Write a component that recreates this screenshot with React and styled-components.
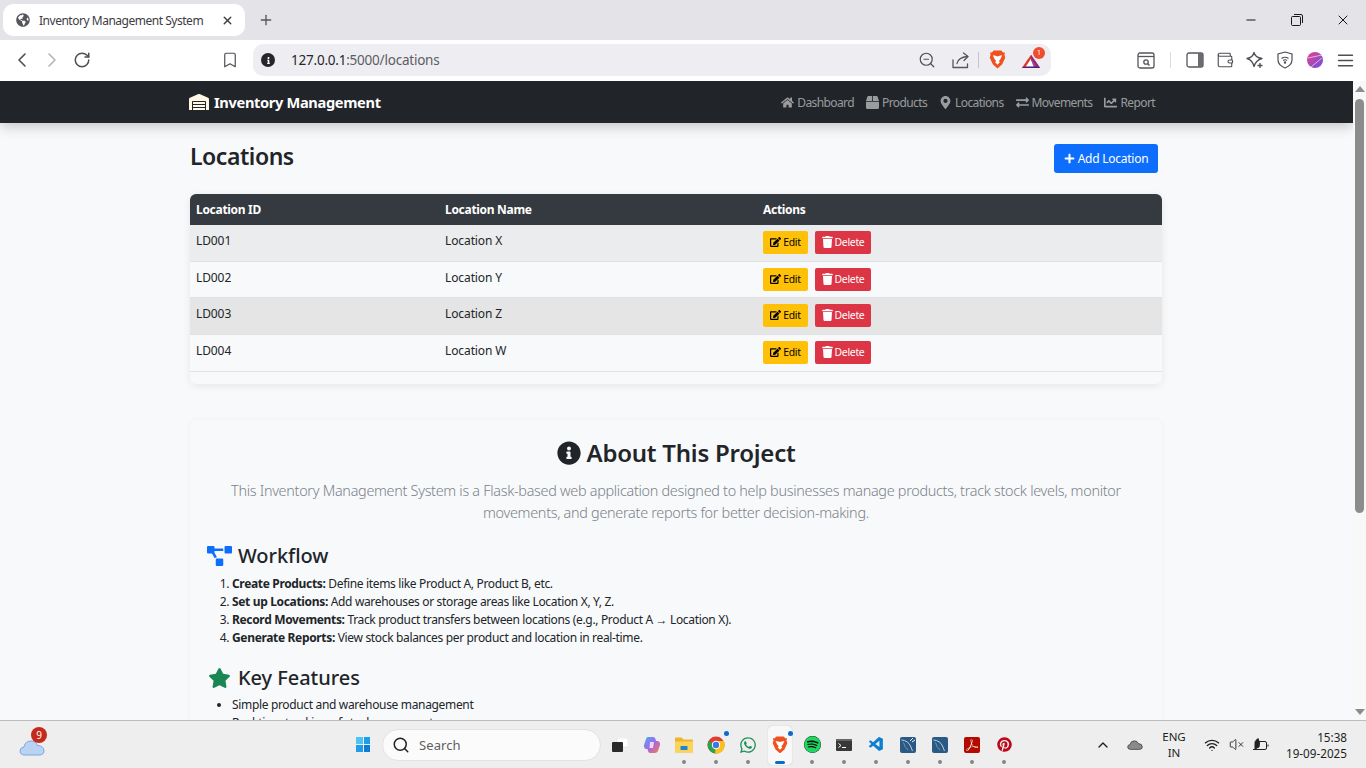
import React from 'react';
import styled, { createGlobalStyle } from 'styled-components';
import {
    FaWarehouse, FaHome, FaBox, FaMapMarkerAlt, FaExchangeAlt, FaChartLine, FaPlus, FaEdit, FaTrash,
    FaInfoCircle, FaProjectDiagram, FaStar, FaGlobeAmericas, FaWhatsapp, FaSpotify, FaPinterest, FaInfo
} from 'react-icons/fa';
import { SiAdobeacrobatreader } from 'react-icons/si';
import { VscVscode } from 'react-icons/vsc';
import { LuChevronLeft, LuChevronRight, LuRotateCw, LuBookmark, LuZoomOut, LuWifi, LuChevronUp, LuVolumeX, LuSearch, LuPlus, LuX, LuMinus, LuMenu, LuWallet } from 'react-icons/lu';

const UI_FONT = '"Noto Sans", "Open Sans", sans-serif';

const GlobalStyle = createGlobalStyle`
    html, body { margin: 0; padding: 0; height: 100%; overflow: hidden; }
    body { font-family: ${UI_FONT}; color: #212529; }
    * { box-sizing: border-box; }
`;

const Screen = styled.div`
    width: 1366px;
    height: 768px;
    display: flex;
    flex-direction: column;
    overflow: hidden;
    background: #f8f9fa;
`;

// browser chrome
const TabStrip = styled.div`
    height: 40px;
    flex: none;
    background: #e3e3e8;
    display: flex;
    align-items: flex-end;
    padding-left: 3px;
`;

const Tab = styled.div`
    width: 242px;
    height: 32px;
    margin-bottom: 4px;
    background: #fff;
    border-radius: 10px;
    display: flex;
    align-items: center;
    padding: 0 11px 0 13px;
    font-size: 12px;
    letter-spacing: -0.48px;
    color: #3c3c43;
    svg:first-child { margin-right: 9px; color: #55565c; }
    span { flex: 1; }
`;

const NewTab = styled.div`
    width: 42px;
    height: 40px;
    display: flex;
    align-items: center;
    justify-content: center;
    color: #55565c;
`;

const WindowButtons = styled.div`
    margin-left: auto;
    height: 40px;
    display: flex;
    align-items: center;
    color: #18181b;
    div { width: 46px; display: flex; justify-content: center; }
`;

const Toolbar = styled.div`
    height: 41px;
    flex: none;
    background: #fff;
    display: flex;
    align-items: center;
    padding: 0 0 1px 7px;
`;

const ToolIcon = styled.div`
    width: ${p => p.$w || 30}px;
    flex: none;
    display: flex;
    justify-content: center;
    align-items: center;
    color: ${p => p.$dim ? '#b4b4ba' : '#4e4f55'};
`;

const BookmarkSlot = styled(ToolIcon)`
    width: 149px;
    justify-content: flex-end;
    padding-right: 7px;
`;

const AddressBar = styled.div`
    width: 798px;
    height: 32px;
    flex: none;
    margin-left: 7px;
    margin-right: 80px;
    border-radius: 10px;
    background: #eeeef2;
    display: flex;
    align-items: center;
    padding: 0 8px;
`;

const Url = styled.div`
    margin-left: 16px;
    font-size: 13.5px;
    letter-spacing: -0.22px;
    color: #5c5d64;
    flex: 1;
    b { font-weight: 400; color: #26262b; }
`;

const InfoDot = styled.span`
    width: 14px;
    height: 14px;
    border-radius: 50%;
    background: #26262b;
    color: #fff;
    display: inline-flex;
    align-items: center;
    justify-content: center;
`;

const ToolSep = styled.div`
    width: 1px;
    flex: none;
    height: 16px;
    background: ${p => p.$light ? '#dcdce0' : '#c4c4c9'};
    margin: 0 ${p => p.$gap || 0}px;
`;

const BatWrap = styled.div`
    position: relative;
    width: 20px;
    height: 16px;
    flex: none;
    margin: 0 2px 0 6px;
`;

const BatBadge = styled.span`
    position: absolute;
    top: -5px;
    right: -4px;
    width: 12px;
    height: 12px;
    border-radius: 50%;
    background: #ef4d2f;
    color: #fff;
    font-size: 7px;
    line-height: 12px;
    text-align: center;
`;

const Viewport = styled.div`
    flex: 1;
    min-height: 0;
    display: flex;
`;

const Page = styled.div`
    flex: 1;
    min-width: 0;
    overflow: hidden;
    background: #f8f9fa;
`;

// scrollbar
const ScrollTrack = styled.div`
    width: 13px;
    flex: none;
    background: #f8f8f9;
    display: flex;
    flex-direction: column;
    align-items: center;
    padding-top: 5px;
`;

const ScrollThumb = styled.div`
    width: 9px;
    height: 414px;
    margin-top: 7px;
    margin-bottom: auto;
    border-radius: 5px;
    background: #8c8c8c;
`;

const ScrollArrow = styled.div`
    width: 0;
    height: 0;
    border-left: 5px solid transparent;
    border-right: 5px solid transparent;
    ${p => p.$down ? 'border-top: 6px solid #8c8c8c; margin-bottom: 5px;' : 'border-bottom: 6px solid #8c8c8c;'}
`;

// app navbar
const Navbar = styled.nav`
    height: 42px;
    background: #212529;
    box-shadow: 0 4px 12px rgba(0, 0, 0, 0.2);
    position: relative;
    display: flex;
    align-items: center;
    justify-content: space-between;
    padding: 0 198px 0 189px;
`;

const Brand = styled.div`
    display: flex;
    align-items: center;
    gap: 5px;
    color: #fff;
    font-size: 14.6px;
    font-weight: 700;
    letter-spacing: -0.33px;
    svg { width: 20px; height: 16px; color: #fff7e6; }
`;

const NavLinks = styled.div`
    display: flex;
    gap: 12px;
`;

const NavLink = styled.a`
    display: flex;
    align-items: center;
    gap: 3px;
    color: rgba(255, 255, 255, 0.55);
    font-size: 12px;
    letter-spacing: -0.6px;
    svg { height: 13px; width: auto; }
`;

const Main = styled.div`
    width: 972px;
    margin-left: 190px;
`;

const TitleRow = styled.div`
    height: 71px;
    display: flex;
    justify-content: space-between;
    align-items: center;
    padding: 21px 4px 21px 0;
`;

const Title = styled.h2`
    margin: 0 0 4px;
    font-size: 23px;
    font-weight: 600;
    letter-spacing: -0.45px;
    line-height: 29px;
`;

const AddButton = styled.button`
    width: 104px;
    height: 29px;
    border: 0;
    border-radius: 3px;
    background: #0d6efd;
    color: #fff;
    font: 400 12px ${UI_FONT};
    letter-spacing: -0.25px;
    display: flex;
    align-items: center;
    justify-content: center;
    gap: 3px;
`;

const TableCard = styled.div`
    border-radius: 6px;
    overflow: hidden;
    box-shadow: 0 2px 8px rgba(0, 0, 0, 0.08);
    padding-bottom: 12px;
    margin-bottom: 36px;
`;

const Table = styled.table`
    width: 100%;
    border-collapse: collapse;
    table-layout: fixed;
    font-size: 12px;
    letter-spacing: -0.1px;
`;

const HeadCell = styled.th`
    width: ${p => p.$w ? p.$w + 'px' : 'auto'};
    height: 31px;
    padding: 0 6px;
    background: #343a40;
    color: #fff;
    text-align: left;
    font-weight: 700;
    letter-spacing: -0.3px;
`;

const Row = styled.tr`
    background: ${p => p.$bg};
    border-bottom: 1px solid #dee2e6;
`;

const Cell = styled.td`
    height: ${p => p.$h}px;
    padding: 7px 6px 5px;
    vertical-align: top;
    line-height: 18px;
`;

const ActionCell = styled(Cell)`
    padding: 6px;
`;

const Actions = styled.div`
    display: flex;
    gap: 7px;
`;

const SmallButton = styled.button`
    height: 23px;
    width: ${p => p.$w}px;
    border: 0;
    border-radius: 2px;
    background: ${p => p.$bg};
    color: ${p => p.$fg};
    font: 400 10.4px ${UI_FONT};
    letter-spacing: -0.28px;
    display: flex;
    align-items: center;
    justify-content: center;
    gap: 2px;
    padding: 0 0 1px;
    svg { width: 11px; height: 12px; }
`;

const AboutCard = styled.section`
    border-radius: 6px;
    box-shadow: 0 0 6px rgba(0, 0, 0, 0.04);
    padding: 17px 17px 0;
`;

const AboutTitle = styled.h3`
    margin: 0 0 11px;
    display: flex;
    align-items: center;
    justify-content: center;
    gap: 6px;
    font-size: 24px;
    font-weight: 600;
    letter-spacing: -0.24px;
    line-height: 32px;
    svg { width: 24px; height: 24px; }
`;

const Lead = styled.p`
    margin: 0 auto 19px;
    width: 910px;
    text-align: center;
    color: #7a828a;
    font-size: 14.4px;
    font-weight: 300;
    letter-spacing: -0.29px;
    line-height: 22px;
`;

const SectionTitle = styled.h4`
    margin: 0 0 6px;
    display: flex;
    align-items: center;
    gap: 6px;
    font-size: 20px;
    font-weight: 500;
    letter-spacing: -0.05px;
    line-height: 26px;
    svg { width: 25px; height: 20px; color: ${p => p.$color}; }
`;

const Steps = styled.ol`
    margin: 0 0 18px;
    padding-left: 25px;
    font-size: 12px;
    letter-spacing: -0.34px;
    line-height: 18px;
    b { font-weight: 700; }
`;

const Bullets = styled(Steps).attrs({ as: 'ul' })`
    margin-top: -1px;
`;

// windows taskbar
const Taskbar = styled.div`
    height: 48px;
    flex: none;
    background: #eeeeee;
    border-top: 1px solid #bdbdbd;
    display: flex;
    align-items: center;
    position: relative;
    z-index: 2;
    padding-left: 19px;
`;

const Weather = styled.div`
    position: relative;
    width: 26px;
    height: 20px;
    margin-top: 6px;
    margin-right: 311px;
`;

const WeatherBadge = styled.span`
    position: absolute;
    top: -11px;
    left: 12px;
    width: 16px;
    height: 16px;
    border-radius: 50%;
    background: #c42b1c;
    color: #fff;
    font-size: 10px;
    line-height: 16px;
    text-align: center;
`;

const WinLogo = styled.div`
    width: 14px;
    height: 15px;
    margin-right: 12px;
    display: grid;
    grid-template-columns: 1fr 1fr;
    gap: 1px;
    i { background: #1e9de8; }
    i:nth-child(1) { background: #4cc4f4; }
    i:nth-child(4) { background: #0c7cd5; }
`;

const SearchBox = styled.div`
    width: 219px;
    height: 32px;
    border-radius: 16px;
    background: #fbfbfb;
    border: 1px solid #e2e2e2;
    display: flex;
    align-items: center;
    gap: 9px;
    padding-left: 9px;
    margin-right: 3px;
    font-size: 13px;
    letter-spacing: 0.1px;
    color: #5f5f5f;
    svg { color: #222; }
`;

const TaskIcons = styled.div`
    display: flex;
`;

const TaskIcon = styled.div`
    position: relative;
    width: 32px;
    height: 40px;
    display: flex;
    align-items: center;
    justify-content: center;
    &::before {
        content: '';
        display: ${p => p.$active ? 'block' : 'none'};
        position: absolute;
        inset: 1px 4px 0;
        z-index: -1;
        background: #f8f8f8;
        border-radius: 4px;
        box-shadow: 0 0 1px rgba(0, 0, 0, 0.3);
    }
    &::after {
        content: '';
        display: ${p => p.$open ? 'block' : 'none'};
        position: absolute;
        bottom: 1px;
        left: 50%;
        width: ${p => p.$active ? 10 : 4}px;
        height: ${p => p.$active ? 3 : 4}px;
        transform: translateX(-50%);
        border-radius: 2px;
        background: ${p => p.$active ? '#0a6cc8' : '#858585'};
    }
`;

const BlueDot = styled.span`
    position: absolute;
    top: 6px;
    right: 3px;
    width: 5px;
    height: 5px;
    border-radius: 50%;
    background: #0a6cc8;
`;

const SpotifyDisc = styled(FaSpotify)`
    width: 17px;
    height: 17px;
    color: #1ed760;
    background: #111;
    border-radius: 50%;
`;

const Tray = styled.div`
    margin-left: auto;
    display: flex;
    align-items: center;
    color: #1f1f1f;
`;

const TraySlot = styled.div`
    width: ${p => p.$w}px;
    display: flex;
    justify-content: center;
    align-items: center;
`;

const Lang = styled.div`
    width: 46px;
    text-align: center;
    font-size: 11.5px;
    line-height: 16px;
`;

const Clock = styled.div`
    width: 91px;
    padding-right: 19px;
    text-align: right;
    font-size: 11.7px;
    line-height: 16px;
    white-space: nowrap;
`;

const BraveLogo = ({ size = 17 }) => (
    <svg width={size} height={size * 1.12} viewBox="0 0 18 20">
        <path d="M9 0.5 L13 0.5 L15 2.5 L17 2.5 L16.3 5 L17.2 8 L14 15 L9 19.5 L4 15 L0.8 8 L1.7 5 L1 2.5 L3 2.5 L5 0.5Z" fill="#f1501f" />
        <path d="M9 6.8 L11 6 L14 5.5 L12.2 9.5 L10.5 11.5 L11.5 13 L9 15.5 L6.5 13 L7.5 11.5 L5.8 9.5 L4 5.5 L7 6Z" fill="#fff" />
    </svg>
);

const BatLogo = () => (
    <svg width="20" height="16" viewBox="0 0 26 20">
        <path d="M13 2 L25 19 L1 19Z" fill="#e2342b" />
        <path d="M13 7 L21 19 L5 19Z" fill="#fff" />
        <path d="M13 2 L25 19 L17 19 L13 9Z" fill="#7b2a8c" opacity="0.8" />
        <path d="M5 17 L21 17 L25 19 L1 19Z" fill="#4b1f7a" />
    </svg>
);

const ChromeLogo = () => (
    <svg width="18" height="18" viewBox="0 0 18 18">
        <circle cx="9" cy="9" r="8.5" fill="#e33b2e" />
        <path d="M9 9 L1.6 5 A8.5 8.5 0 0 0 8 17.4Z" fill="#2ba24c" />
        <path d="M9 5 L16.8 5 A8.5 8.5 0 0 1 8 17.4Z" fill="#f9c21a" />
        <circle cx="9" cy="9" r="4.2" fill="#fff" />
        <circle cx="9" cy="9" r="3.2" fill="#3b78e7" />
    </svg>
);

const FolderLogo = () => (
    <svg width="18" height="16" viewBox="0 0 18 16">
        <path d="M0 1.5 Q0 0.5 1 0.5 H6.5 L8.5 2.5 H17 Q18 2.5 18 3.5 V14.5 Q18 15.5 17 15.5 H1 Q0 15.5 0 14.5Z" fill="#f0b429" />
        <path d="M0 4.5 H18 V14.5 Q18 15.5 17 15.5 H1 Q0 15.5 0 14.5Z" fill="#fbd35b" />
        <rect x="5.5" y="9" width="7" height="4" rx="0.5" fill="#1c86d1" />
    </svg>
);

const CopilotLogo = () => (
    <svg width="18" height="18" viewBox="0 0 18 18">
        <defs>
            <linearGradient id="copA" x1="0" y1="0" x2="1" y2="1">
                <stop offset="0" stopColor="#3fb2f0" />
                <stop offset="0.5" stopColor="#a865e8" />
                <stop offset="1" stopColor="#f5803e" />
            </linearGradient>
        </defs>
        <path d="M5 1 H10 Q12 1 12.5 3 L13 5 H15 Q17.5 6 17 9 L15 15 Q14 17 12 17 H7 Q5.5 17 5 15 L4.5 13 H3 Q0.5 12 1 9 L3 3 Q3.5 1 5 1Z" fill="url(#copA)" />
        <path d="M7 6 H11 L10 12 H6.5Z" fill="#fff" opacity="0.75" />
    </svg>
);

const TaskViewLogo = () => (
    <svg width="16" height="14" viewBox="0 0 16 14">
        <rect x="5" y="0" width="11" height="9" rx="1" fill="#fff" stroke="#d6d6d6" strokeWidth="0.5" />
        <rect x="0" y="4" width="11" height="10" rx="1" fill="#2a2a2a" />
    </svg>
);

const TerminalLogo = () => (
    <svg width="16" height="12" viewBox="0 0 16 12">
        <rect width="16" height="12" rx="1" fill="#383838" />
        <rect width="16" height="2" fill="#666" />
        <path d="M2.5 4.5 L5 6.5 L2.5 8.5" stroke="#fff" strokeWidth="1" fill="none" />
        <rect x="6" y="8" width="4" height="1" fill="#fff" />
    </svg>
);

const MysqlLogo = ({ spark }) => (
    <svg width="16" height="16" viewBox="0 0 16 16">
        <rect width="16" height="16" rx="2" fill="#2a5a84" />
        <path d="M1.5 3 Q8 3.5 10.5 9 L12.5 14" stroke="#b8cfe0" strokeWidth="1" fill="none" />
        <path d="M3.5 5.5 Q4.5 10 8 13" stroke="#7fa3c0" strokeWidth="0.8" fill="none" />
        {spark && <path d="M10 4 L13 1 M12 5 L15 3" stroke="#e6eef5" strokeWidth="1" fill="none" />}
    </svg>
);

const AcrobatTile = styled.div`
    width: 16px;
    height: 16px;
    border-radius: 2px;
    background: #b30b00;
    color: #fff;
    display: flex;
    align-items: center;
    justify-content: center;
`;

const CloudLogo = ({ w = 26, h = 18, fill = '#b9d3f5', stroke = '#7ea6e0' }) => (
    <svg width={w} height={h} viewBox="0 0 26 18">
        <path d="M6 17 Q1 17 1 13 Q1 9.5 5 9 Q6 3 12 3 Q17 3 18.5 7.5 Q25 8 25 13 Q25 17 20 17Z" fill={fill} stroke={stroke} strokeWidth="1" />
    </svg>
);

const ShareIcon = () => (
    <svg width="18" height="17" viewBox="0 0 18 17" fill="none" stroke="#55565c" strokeWidth="1.3" strokeLinecap="round" strokeLinejoin="round">
        <path d="M1 8 V15.5 H15.5 V12" />
        <path d="M5 11.5 Q6 5.5 15.5 4.5" />
        <path d="M11.5 1 L16 4.5 L12 8.5" />
    </svg>
);

const RestoreIcon = () => (
    <svg width="12" height="12" viewBox="0 0 12 12" fill="none" stroke="#18181b" strokeWidth="1">
        <rect x="0.5" y="2.5" width="9" height="9" rx="1" />
        <path d="M3 0.5 H10 Q11.5 0.5 11.5 2 V9" />
    </svg>
);

const FindIcon = () => (
    <svg width="18" height="17" viewBox="0 0 18 17" fill="none" stroke="#55565c" strokeWidth="1.3">
        <rect x="1" y="1" width="16" height="15" rx="2" />
        <path d="M1 4.5 H17" />
        <circle cx="9" cy="10" r="2.2" />
        <path d="M10.8 11.8 L12.5 13.5" />
    </svg>
);

const SidebarIcon = () => (
    <svg width="18" height="16" viewBox="0 0 18 16">
        <rect x="1" y="1" width="16" height="14" rx="2" fill="#fff" stroke="#55565c" strokeWidth="1.3" />
        <path d="M12 1 H15 Q17 1 17 3 V13 Q17 15 15 15 H12Z" fill="#6b6c72" />
    </svg>
);

const SparkIcon = () => (
    <svg width="18" height="18" viewBox="0 0 18 18" fill="none" stroke="#4e4f55" strokeWidth="1.3" strokeLinejoin="round">
        <path d="M8 1.5 Q9 6.5 16 7.5 Q10 9 8 15.5 Q6.5 9 1 7.5 Q7 6.5 8 1.5Z" />
        <path d="M14 12 V17 M11.5 14.5 H16.5" />
    </svg>
);

const ShieldIcon = () => (
    <svg width="16" height="18" viewBox="0 0 16 18" fill="none" stroke="#4e4f55" strokeWidth="1.2">
        <path d="M8 1 L15 3 V9 Q15 14 8 17 Q1 14 1 9 V3Z" />
        <path d="M4.5 7.5 Q8 5 11.5 7.5 M6 9.5 Q8 8 10 9.5" />
        <circle cx="8" cy="11.5" r="0.6" fill="#4e4f55" />
    </svg>
);

const ProfileIcon = () => (
    <svg width="16" height="16" viewBox="0 0 16 16">
        <defs>
            <linearGradient id="profA" x1="0" y1="0" x2="1" y2="1">
                <stop offset="0" stopColor="#e8418c" />
                <stop offset="1" stopColor="#6a4fe0" />
            </linearGradient>
        </defs>
        <circle cx="8" cy="8" r="8" fill="url(#profA)" />
        <path d="M1 6 L15 3 M4 15 L15 6" stroke="#fff" strokeWidth="0.6" fill="none" />
    </svg>
);

const BatteryIcon = () => (
    <svg width="17" height="14" viewBox="0 0 17 14" fill="none" stroke="#222" strokeWidth="1">
        <path d="M6 3.5 H13 Q14.5 3.5 14.5 5 V10 Q14.5 11.5 13 11.5 H1" />
        <path d="M16 6.5 V8.5" />
        <path d="M6 0.5 Q2 3 3 7 L3 11 L7 9 Q8.5 5 6 0.5Z" fill="#222" />
    </svg>
);

const locations = [
    { id: 'LD001', name: 'Location X', bg: '#ebeced', h: 36 },
    { id: 'LD002', name: 'Location Y', bg: '#f8f9fa', h: 36 },
    { id: 'LD003', name: 'Location Z', bg: '#e5e5e5', h: 37 },
    { id: 'LD004', name: 'Location W', bg: '#f8f9fa', h: 37 },
];

const navItems = [
    { label: 'Dashboard', Icon: FaHome },
    { label: 'Products', Icon: FaBox },
    { label: 'Locations', Icon: FaMapMarkerAlt },
    { label: 'Movements', Icon: FaExchangeAlt },
    { label: 'Report', Icon: FaChartLine },
];

const App = () => (
    <Screen>
        <GlobalStyle />
        <TabStrip>
            <Tab>
                <FaGlobeAmericas size={14} />
                <span>Inventory Management System</span>
                <LuX size={13} strokeWidth={2.5} />
            </Tab>
            <NewTab><LuPlus size={16} /></NewTab>
            <WindowButtons>
                <div><LuMinus size={14} /></div>
                <div><RestoreIcon /></div>
                <div><LuX size={16} strokeWidth={1.5} /></div>
            </WindowButtons>
        </TabStrip>
        <Toolbar>
            <ToolIcon><LuChevronLeft size={24} strokeWidth={1.6} /></ToolIcon>
            <ToolIcon $dim><LuChevronRight size={24} strokeWidth={1.6} /></ToolIcon>
            <ToolIcon><LuRotateCw size={18} /></ToolIcon>
            <BookmarkSlot><LuBookmark size={18} strokeWidth={1.6} /></BookmarkSlot>
            <AddressBar>
                <InfoDot><FaInfo size={7} /></InfoDot>
                <Url><b>127.0.0.1</b>:5000/locations</Url>
                <ToolIcon $w={34}><LuZoomOut size={18} strokeWidth={1.6} /></ToolIcon>
                <ToolIcon $w={34}><ShareIcon /></ToolIcon>
                <ToolSep />
                <ToolIcon $w={36}><BraveLogo /></ToolIcon>
                <BatWrap><BatLogo /><BatBadge>1</BatBadge></BatWrap>
            </AddressBar>
            <ToolIcon><FindIcon /></ToolIcon>
            <ToolSep $light $gap={9} />
            <ToolIcon><SidebarIcon /></ToolIcon>
            <ToolIcon><LuWallet size={18} strokeWidth={1.5} /></ToolIcon>
            <ToolIcon><SparkIcon /></ToolIcon>
            <ToolIcon><ShieldIcon /></ToolIcon>
            <ToolIcon><ProfileIcon /></ToolIcon>
            <ToolIcon><LuMenu size={21} strokeWidth={1.6} /></ToolIcon>
        </Toolbar>
        <Viewport>
            <Page>
                <Navbar>
                    <Brand><FaWarehouse />Inventory Management</Brand>
                    <NavLinks>
                        {navItems.map(({ label, Icon }) => (
                            <NavLink key={label}><Icon />{label}</NavLink>
                        ))}
                    </NavLinks>
                </Navbar>
                <Main>
                    <TitleRow>
                        <Title>Locations</Title>
                        <AddButton><FaPlus size={11} />Add Location</AddButton>
                    </TitleRow>
                    <TableCard>
                        <Table>
                            <thead>
                                <tr>
                                    <HeadCell $w={249}>Location ID</HeadCell>
                                    <HeadCell $w={318}>Location Name</HeadCell>
                                    <HeadCell>Actions</HeadCell>
                                </tr>
                            </thead>
                            <tbody>
                                {locations.map(loc => (
                                    <Row key={loc.id} $bg={loc.bg}>
                                        <Cell $h={loc.h}>{loc.id}</Cell>
                                        <Cell $h={loc.h}>{loc.name}</Cell>
                                        <ActionCell $h={loc.h}>
                                            <Actions>
                                                <SmallButton $w={45} $bg="#ffc107" $fg="#000"><FaEdit />Edit</SmallButton>
                                                <SmallButton $w={56} $bg="#dc3545" $fg="#fff"><FaTrash />Delete</SmallButton>
                                            </Actions>
                                        </ActionCell>
                                    </Row>
                                ))}
                            </tbody>
                        </Table>
                    </TableCard>
                    <AboutCard>
                        <AboutTitle><FaInfoCircle />About This Project</AboutTitle>
                        <Lead>
                            This Inventory Management System is a Flask-based web application designed to help businesses manage products, track stock levels, monitor movements, and generate reports for better decision-making.
                        </Lead>
                        <SectionTitle $color="#0d6efd"><FaProjectDiagram />Workflow</SectionTitle>
                        <Steps>
                            <li><b>Create Products:</b> Define items like Product A, Product B, etc.</li>
                            <li><b>Set up Locations:</b> Add warehouses or storage areas like Location X, Y, Z.</li>
                            <li><b>Record Movements:</b> Track product transfers between locations (e.g., Product A → Location X).</li>
                            <li><b>Generate Reports:</b> View stock balances per product and location in real-time.</li>
                        </Steps>
                        <SectionTitle $color="#198754"><FaStar />Key Features</SectionTitle>
                        <Bullets>
                            <li>Simple product and warehouse management</li>
                            <li>Real-time tracking of stock movements</li>
                        </Bullets>
                    </AboutCard>
                </Main>
            </Page>
            <ScrollTrack>
                <ScrollArrow />
                <ScrollThumb />
                <ScrollArrow $down />
            </ScrollTrack>
        </Viewport>
        <Taskbar>
            <Weather>
                <CloudLogo />
                <WeatherBadge>9</WeatherBadge>
            </Weather>
            <WinLogo><i /><i /><i /><i /></WinLogo>
            <SearchBox><LuSearch size={18} strokeWidth={2} />Search</SearchBox>
            <TaskIcons>
                <TaskIcon><TaskViewLogo /></TaskIcon>
                <TaskIcon><CopilotLogo /></TaskIcon>
                <TaskIcon $open><FolderLogo /></TaskIcon>
                <TaskIcon $open><ChromeLogo /><BlueDot /></TaskIcon>
                <TaskIcon $open><FaWhatsapp size={18} color="#1d8f5a" /></TaskIcon>
                <TaskIcon $open $active><BraveLogo size={16} /><BlueDot /></TaskIcon>
                <TaskIcon $open><SpotifyDisc /></TaskIcon>
                <TaskIcon $open><TerminalLogo /></TaskIcon>
                <TaskIcon $open><VscVscode size={17} color="#0d7fd0" /></TaskIcon>
                <TaskIcon $open><MysqlLogo spark /></TaskIcon>
                <TaskIcon $open><MysqlLogo /></TaskIcon>
                <TaskIcon $open><AcrobatTile><SiAdobeacrobatreader size={12} /></AcrobatTile></TaskIcon>
                <TaskIcon $open><FaPinterest size={15} color="#bd081c" /></TaskIcon>
            </TaskIcons>
            <Tray>
                <TraySlot $w={32}><LuChevronUp size={16} /></TraySlot>
                <TraySlot $w={32}><CloudLogo w={16} h={11} fill="#8a8a8a" stroke="#222" /></TraySlot>
                <Lang>ENG<br />IN</Lang>
                <TraySlot $w={30}><LuWifi size={16} /></TraySlot>
                <TraySlot $w={18}><LuVolumeX size={15} strokeWidth={1.4} /></TraySlot>
                <TraySlot $w={30}><BatteryIcon /></TraySlot>
                <Clock>15:38<br />19-09-2025</Clock>
            </Tray>
        </Taskbar>
    </Screen>
);

export default App;
